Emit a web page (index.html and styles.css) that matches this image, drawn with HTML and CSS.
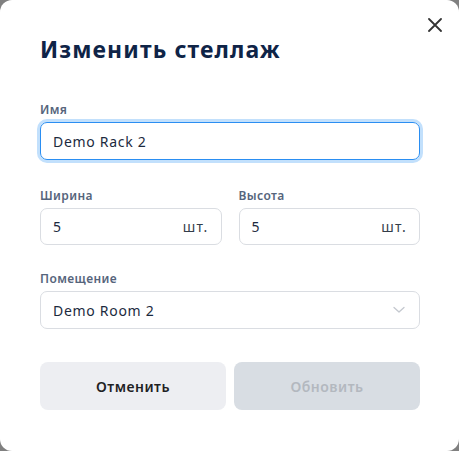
FILE: index.html
```html
<!DOCTYPE html>
<html lang="ru">
<head>
<meta charset="utf-8">
<link rel="stylesheet" href="styles.css">
</head>
<body>
<div class="dialog">
  <button class="close" aria-label="Закрыть">
    <svg width="14" height="14" viewBox="0 0 14 14"><path d="M1 1L13 13M13 1L1 13" stroke="#333" stroke-width="1.8" stroke-linecap="round"/></svg>
  </button>
  <h1 class="title">Изменить стеллаж</h1>
  <div class="field">
    <div class="label">Имя</div>
    <div class="input focused">Demo Rack 2</div>
  </div>
  <div class="row">
    <div class="field">
      <div class="label">Ширина</div>
      <div class="input short"><span>5</span><span class="unit">шт.</span></div>
    </div>
    <div class="field">
      <div class="label">Высота</div>
      <div class="input short"><span>5</span><span class="unit">шт.</span></div>
    </div>
  </div>
  <div class="field room">
    <div class="label">Помещение</div>
    <div class="input select"><span>Demo Room 2</span>
      <svg width="12" height="8" viewBox="0 0 12 8"><path d="M1 1.5L6 6L11 1.5" fill="none" stroke="#c4c8cf" stroke-width="1.3" stroke-linecap="round" stroke-linejoin="round"/></svg>
    </div>
  </div>
  <div class="buttons">
    <button class="btn cancel">Отменить</button>
    <button class="btn update">Обновить</button>
  </div>
</div>
</body>
</html>
```
FILE: styles.css
```css
html, body {
  margin: 0;
  padding: 0;
  background: #808080;
}
body {
  font-family: "Noto Sans", "Open Sans", sans-serif;
  width: 459px;
  height: 451px;
}
.dialog {
  position: relative;
  box-sizing: border-box;
  width: 459px;
  height: 451px;
  background: #fff;
  border-radius: 12px;
  padding: 34px 39px 0 40px;
}
.close {
  position: absolute;
  top: 18px;
  right: 17px;
  width: 14px;
  height: 14px;
  padding: 0;
  border: 0;
  background: none;
  display: flex;
}
.title {
  margin: 0 0 38px 0;
  font-size: 23px;
  line-height: 30px;
  font-weight: 700;
  color: #0f2447;
  letter-spacing: 1.1px;
}
.field {
  display: flex;
  flex-direction: column;
  flex: 1;
}
.label {
  font-size: 12px;
  line-height: 16px;
  font-weight: 600;
  color: #56657c;
  margin-bottom: 4px;
  letter-spacing: 0.4px;
}
.input {
  box-sizing: border-box;
  height: 38px;
  border: 1px solid #dadde2;
  border-radius: 7px;
  padding: 0 12px;
  display: flex;
  align-items: center;
  justify-content: space-between;
  font-size: 14px;
  color: #1c2a3e;
  letter-spacing: 0.7px;
}
.input.short {
  height: 37px;
}
.input.focused {
  border-color: #2a8ef2;
  box-shadow: 0 0 0 3px #c2e0fc;
}
.unit {
  color: #333d4a;
  letter-spacing: 1.2px;
}
.select {
  padding-right: 14px;
}
.row {
  display: flex;
  gap: 17px;
  margin-top: 28px;
}
.room {
  margin-top: 26px;
}
.buttons {
  display: flex;
  gap: 8px;
  margin-top: 33px;
}
.btn {
  flex: 1;
  height: 48px;
  border: 0;
  border-radius: 8px;
  font-family: inherit;
  font-size: 14px;
  font-weight: 600;
  letter-spacing: 0.5px;
}
.cancel {
  background: #edeef2;
  color: #1f1f24;
}
.update {
  background: #d8dde3;
  color: #b3b8bf;
}
```
